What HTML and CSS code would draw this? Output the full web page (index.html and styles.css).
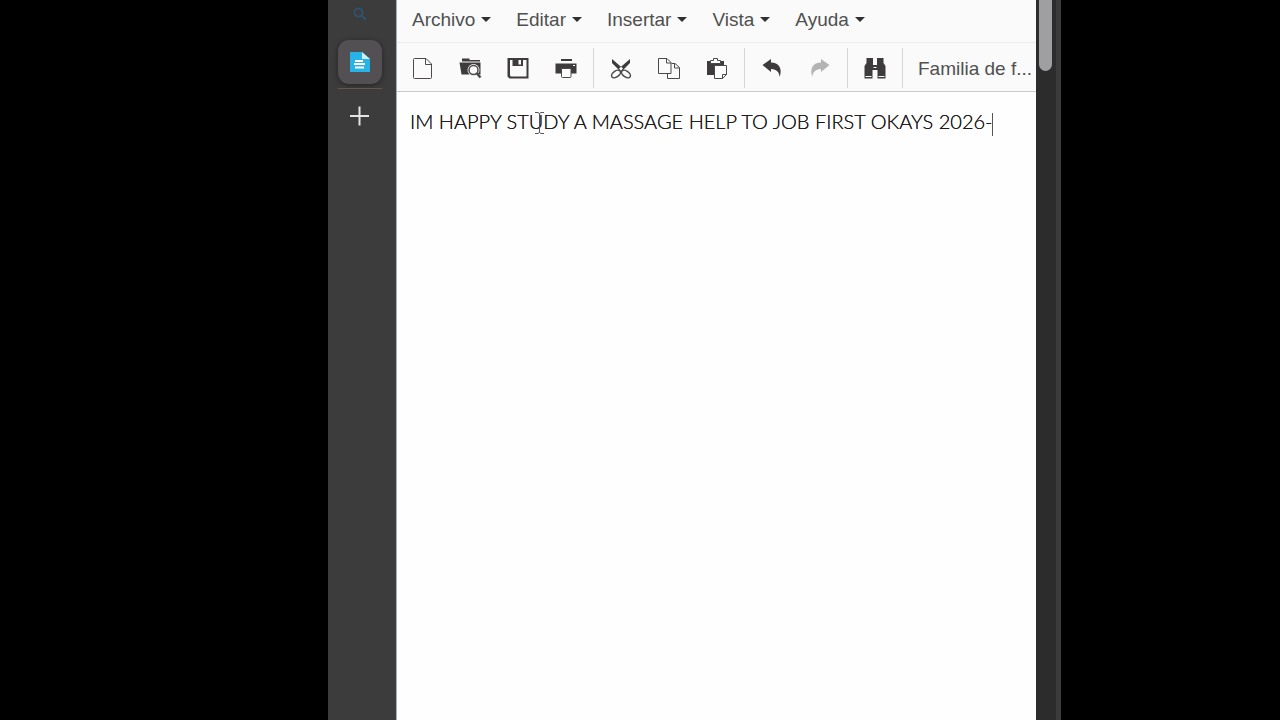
FILE: index.html
```
<!DOCTYPE html>
<html lang="es">
<head>
<meta charset="UTF-8">
<title>Documento</title>
<link rel="stylesheet" href="styles.css">
</head>
<body>
<div class="window">
  <!-- barra lateral -->
  <nav class="sidebar">
    <button class="side-search" aria-label="Buscar">
      <svg width="14" height="14" viewBox="0 0 14 14" fill="none" stroke="#2f526f" stroke-width="2"><circle cx="5.500" cy="5.500" r="4"/><path d="M8.500 8.500l4.500 4.500"/></svg>
    </button>
    <button class="side-app" aria-label="Documento">
      <svg width="20" height="20" viewBox="0 0 20 20"><path fill="#27b3e6" d="M0 0h12l8 7v13H0z"/><path fill="#c9f0fc" d="M12 0l8 7h-8z"/><path stroke="#fff" stroke-width="2" d="M5 9h8M4 12h11M5 15.500h9"/></svg>
    </button>
    <button class="side-add" aria-label="Agregar">
      <svg width="20" height="20" viewBox="0 0 20 20"><path stroke="#e4e4e4" stroke-width="2" d="M9.500 .5v19M0 10h19"/></svg>
    </button>
  </nav>

  <div class="editor">
    <!-- menus -->
    <div class="menubar">
      <button class="menu">Archivo</button>
      <button class="menu">Editar</button>
      <button class="menu">Insertar</button>
      <button class="menu">Vista</button>
      <button class="menu">Ayuda</button>
    </div>

    <!-- herramientas -->
    <div class="toolbar">
      <button class="tool" aria-label="Nuevo">
        <svg viewBox="0 0 24 24"><path class="line" d="M3.500 3.500q0-1 1-1H16l5.500 5.500v13.500q0 1-1 1h-16q-1 0-1-1zM15.500 2.500v6h6"/></svg>
      </button>
      <button class="tool" aria-label="Abrir">
        <svg viewBox="0 0 24 24"><path d="M4 2.500h7.500V4H22v1.500H4zM1.500 6.500h21v12h-19z"/><circle cx="15.500" cy="14" r="6" fill="#fafafa"/><circle class="mid" cx="15.500" cy="14" r="4.500"/><path class="thick" d="M18.500 17l4 4.500"/></svg>
      </button>
      <button class="tool" aria-label="Guardar">
        <svg viewBox="0 0 24 24"><path fill-rule="evenodd" d="M1.500 2h21v20.500h-19l-2-2zM4 4v15q0 1.500 1.500 1.500h15V4H17v6H6.500V4zM12.500 4v4.500H15V4z"/></svg>
      </button>
      <button class="tool" aria-label="Imprimir">
        <svg viewBox="0 0 24 24"><path d="M7 3h11v2H7zM1.500 7.500h21v10h-21z"/><path fill="#fff" d="M19 9h2v1h-2z"/><path fill="#fff" class="line" d="M7.500 12.500h9.500v8q0 1-1 1H8.500q-1 0-1-1z"/></svg>
      </button>
      <span class="sep"></span>
      <button class="tool" aria-label="Cortar">
        <svg viewBox="0 0 24 24"><path d="M3 3l11 9.500-2.500 3L3 7zM21 3L10 12.500l2.500 3L21 7z"/><ellipse class="mid" cx="7" cy="18" rx="5" ry="3" transform="rotate(-35 7 18)"/><ellipse class="mid" cx="17" cy="18" rx="5" ry="3" transform="rotate(35 17 18)"/></svg>
      </button>
      <button class="tool" aria-label="Copiar">
        <svg viewBox="0 0 24 24"><path class="line" d="M1.500 2.500H10l4 4v11H1.500zM9.500 2.500V7H14M14.500 7.500H18l4.500 4v11h-12v-5M17.500 7.500V12h5"/></svg>
      </button>
      <button class="tool" aria-label="Pegar">
        <svg viewBox="0 0 24 24"><path d="M2 5h17v14H2z"/><path fill="#fff" class="line" d="M5.500 7.500v-3h3v-2h4v2h3v3z"/><path fill="#fff" class="line" d="M9.500 9.500h12v9l-4 4h-8zM17.500 22.500v-4h4"/></svg>
      </button>
      <span class="sep"></span>
      <button class="tool" aria-label="Deshacer">
        <svg viewBox="0 0 24 24"><path d="M2.500 9l8.500-6v3.500c7.500 0 12 6 8.500 14.500 0-4.500-2.500-7.500-8.500-8v3z"/></svg>
      </button>
      <button class="tool" aria-label="Rehacer" disabled>
        <svg viewBox="0 0 24 24"><path d="M21.500 9L13 3v3.500C5.500 6.500 1 12.500 4.500 21c0-4.500 2.500-7.500 8.500-8v3z"/></svg>
      </button>
      <span class="sep"></span>
      <button class="tool" aria-label="Buscar y reemplazar">
        <svg viewBox="0 0 24 24"><path d="M3.500 2H10v7h4V2h6.500v5l2 3v12.500h-8V14h-5v8.500h-8V10l2-3z"/><path stroke="#fafafa" d="M2.500 20.500h6M15.500 20.500h6M10.500 11.500h3"/></svg>
      </button>
      <span class="sep"></span>
      <select class="font" aria-label="Familia de fuente">
        <option>Familia de f...</option>
      </select>
    </div>

    <!-- documento -->
    <div class="doc" contenteditable="true" role="textbox" aria-label="Documento" spellcheck="false">
      <p class="text">IM HAPPY STUDY A MASSAGE HELP TO JOB FIRST OKAYS 2026-<span class="caret"></span></p>
    </div>
    <svg class="pointer" width="9" height="22" viewBox="0 0 9 22"><path fill="none" stroke="#555" d="M0 .5h3l1.500 1L6 .5h3M4.500 1.500v19M0 21.500h3l1.500-1 1.500 1h3"/></svg>
  </div>

  <div class="scroll">
    <div class="thumb"></div>
  </div>
</div>
</body>
</html>
```
FILE: styles.css
```
body {
  margin: 0;
  background: #000;
  font-family: "Liberation Sans", Arial, sans-serif;
}
button, select {
  font: inherit;
  color: inherit;
  background: none;
  border: 0;
  padding: 0;
  cursor: pointer;
}
svg {
  display: block;
}
.window {
  display: flex;
  min-height: 100vh;
  margin-left: 328px;
  margin-right: 219px;
}

/* barra lateral */
.sidebar {
  flex: none;
  width: 64px;
  padding-right: 3px;
  background: #3c3c3c;
  border-right: 1px solid #36454c;
  display: flex;
  flex-direction: column;
  align-items: center;
}
.side-search {
  padding: 7px 0;
}
.side-app {
  display: flex;
  align-items: center;
  justify-content: center;
  width: 44px;
  height: 44px;
  margin-top: 12px;
  border-radius: 11px;
  background: #525052;
  box-shadow: 0 1px 5px #222;
}
.side-add {
  width: 44px;
  margin-top: 4px;
  padding: 17px 12px;
  border-top: 1px solid #685456;
}

/* editor */
.editor {
  position: relative;
  flex: 1;
  min-width: 0;
  background: #fefefe;
  border-left: 1px solid #9bb0b4;
}
.menubar {
  display: flex;
  gap: 25px;
  height: 42px;
  padding-left: 15px;
  background: #fafafa;
  border-bottom: 1px solid #ececec;
  font-size: 19px;
  color: #505050;
}
.menu {
  display: flex;
  align-items: center;
  gap: 6px;
  height: 39px;
}
.menu::after {
  content: "";
  border: 5px solid transparent;
  border-top-color: #303030;
  border-bottom: 0;
}
.toolbar {
  display: flex;
  align-items: center;
  height: 46px;
  padding-top: 2px;
  padding-left: 1px;
  background: #fafafa;
  border-bottom: 1px solid #cbcbcb;
}
.tool {
  flex: none;
  width: 48px;
  height: 46px;
  padding: 0 12px;
}
.tool svg {
  width: 24px;
  height: 24px;
  fill: #3e3b3d;
}
.tool:disabled svg {
  fill: #b4b4b4;
}
.tool .line, .tool .mid, .tool .thick {
  stroke: #4c494b;
}
.tool .line:not([fill]), .tool .mid {
  fill: none;
}
.tool .mid {
  stroke-width: 1.5;
}
.tool .thick {
  stroke-width: 2.5;
}
.sep {
  flex: none;
  width: 1px;
  height: 40px;
  margin: 0 3px;
  background: #d6d6d6;
}
.font {
  flex: 1;
  min-width: 0;
  height: 46px;
  padding-left: 12px;
  appearance: none;
  font-size: 19px;
  color: #505050;
}

/* documento */
.doc {
  padding: 15px 13px;
  outline: 0;
}
.text {
  margin: 0;
  font-family: Lato, sans-serif;
  font-size: 20px;
  font-weight: 300;
  line-height: 28px;
  white-space: nowrap;
  color: #1c1818;
  text-shadow: 0 0 #1c1818;
}
.caret {
  display: inline-block;
  width: 1px;
  height: 23px;
  background: #555;
  vertical-align: middle;
}
/* puntero sobre el texto */
.pointer {
  position: absolute;
  left: 138px;
  top: 112px;
}

/* scroll */
.scroll {
  flex: none;
  width: 20px;
  background: #2c2c2c;
  border-right: 5px solid #3b3b3b;
}
.thumb {
  width: 13px;
  height: 71px;
  margin-left: 3px;
  border-radius: 0 0 7px 7px;
  background: #9f9fa1;
}
```
